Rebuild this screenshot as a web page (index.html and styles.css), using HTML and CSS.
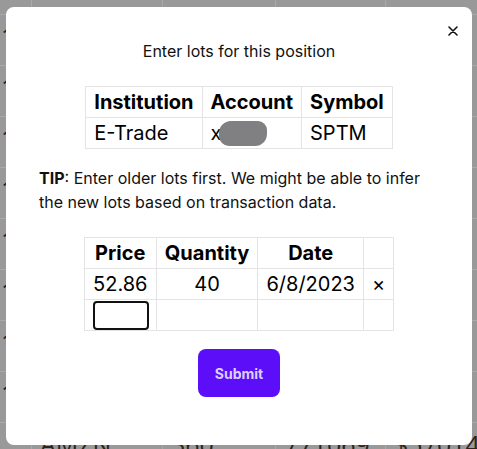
FILE: index.html
```html
<!DOCTYPE html>
<html lang="en">
<head>
  <meta charset="UTF-8">
  <title>Enter lots</title>
  <link rel="stylesheet" href="styles.css">
</head>
<body>
  <div class="backdrop">
    <div class="brow"><span></span><span></span><span></span><span></span><span></span></div>
    <div class="brow"><span>1</span><span></span><span></span><span></span><span class="u">2</span></div>
    <div class="brow"><span>1</span><span></span><span></span><span></span><span>6</span></div>
    <div class="brow"><span>1</span><span></span><span></span><span></span><span>.3</span></div>
    <div class="brow"><span>1</span><span></span><span></span><span></span><span>.9</span></div>
    <div class="brow"><span>1</span><span></span><span></span><span></span><span>8</span></div>
    <div class="brow"><span>1</span><span></span><span></span><span></span><span>.9</span></div>
    <div class="brow"><span>1</span><span></span><span></span><span></span><span>.3</span></div>
    <div class="brow"><span>1</span><span></span><span></span><span></span><span>5</span></div>
    <div class="brow"><span></span><span>AMZN</span><span>360</span><span>771069</span><span>$57014.6</span></div>
  </div>

  <div class="modal">
    <button class="close" aria-label="close">
      <svg width="10" height="10" viewBox="0 0 10 10"><path d="M1 1L9 9M9 1L1 9" stroke="#111" stroke-width="1.6" stroke-linecap="round"/></svg>
    </button>
    <div class="title">Enter lots for this position</div>

    <table class="info">
      <tr><th>Institution</th><th>Account</th><th>Symbol</th></tr>
      <tr><td>E-Trade</td><td>x<span class="blur"></span></td><td>SPTM</td></tr>
    </table>

    <p class="tip"><b>TIP</b>: Enter older lots first. We might be able to infer the new lots based on transaction data.</p>

    <table class="lots">
      <tr><th>Price</th><th>Quantity</th><th>Date</th><th></th></tr>
      <tr><td>52.86</td><td>40</td><td>6/8/2023</td><td class="del">×</td></tr>
      <tr><td class="in"><input class="cell-input" type="text"></td><td></td><td></td><td></td></tr>
    </table>

    <button class="submit">Submit</button>
  </div>
</body>
</html>
```

FILE: styles.css
```css
body{
  margin: 0;
  background: #999;
  font-family: Inter, "Noto Sans", sans-serif;
  overflow: hidden;
}
.backdrop{
  margin-top: -36px;
  font: 25px "Open Sans", sans-serif;
  line-height: 30px;
  color: #2e2219;
}
.brow{
  display: grid;
  grid-template-columns: 31px 131px 113px 110px 1fr;
  height: 51px;
  border-bottom: 1px solid #a9a9a9;
  box-sizing: border-box;
}
.brow span{
  border-left: 1px solid #a9a9a9;
  padding: 6px 0 0 8px;
  white-space: nowrap;
  overflow: hidden;
}
.brow span:first-child{
  border-left: 0;
  padding-left: 1px;
}
.brow .u{
  text-decoration: underline;
}
.modal{
  position: fixed;
  left: 6px;
  top: 7px;
  width: 466px;
  height: 438px;
  box-sizing: border-box;
  padding: 33px 33px 0;
  background: #fff;
  border-radius: 8px;
  display: flex;
  flex-direction: column;
  align-items: center;
  color: #111;
}
.close{
  position: absolute;
  right: 14px;
  top: 19px;
  border: 0;
  background: none;
  padding: 0;
  width: 10px;
  height: 10px;
  line-height: 0;
}
.title{
  font-size: 16px;
  line-height: 22px;
}
table{
  border-collapse: collapse;
  font-size: 20px;
  color: #000;
}
th, td{
  border: 1px solid #e4e4e7;
  padding: 0 8px;
  height: 31px;
  box-sizing: border-box;
  line-height: 24px;
}
th{
  font-weight: 700;
}
.info{
  margin-top: 24px;
}
.info th, .info td{
  text-align: left;
}
.blur{
  display: inline-block;
  width: 48px;
  height: 25px;
  background: #808083;
  border-radius: 12px 9px 12px 10px;
  vertical-align: -6px;
  margin-left: -2px;
}
.tip{
  align-self: stretch;
  margin: 17px 0 0;
  font-size: 16px;
  line-height: 24px;
}
.lots{
  margin-top: 23px;
}
.lots th, .lots td{
  text-align: center;
  padding: 0 8px;
}
.lots .in{
  padding: 0 7px 0 8px;
}
.lots .del{
  padding: 0 8px;
}
.cell-input{
  display: block;
  width: 56px;
  height: 29px;
  box-sizing: border-box;
  border: 2px solid #111;
  border-radius: 4px;
  margin: 0;
  padding: 0 4px;
  font: 16px Inter, sans-serif;
}
.submit{
  margin-top: 18px;
  width: 82px;
  height: 48px;
  border: 0;
  border-radius: 8px;
  background: #5b0ef7;
  color: #ddd0ff;
  font: 700 14px Inter, sans-serif;
}
```
